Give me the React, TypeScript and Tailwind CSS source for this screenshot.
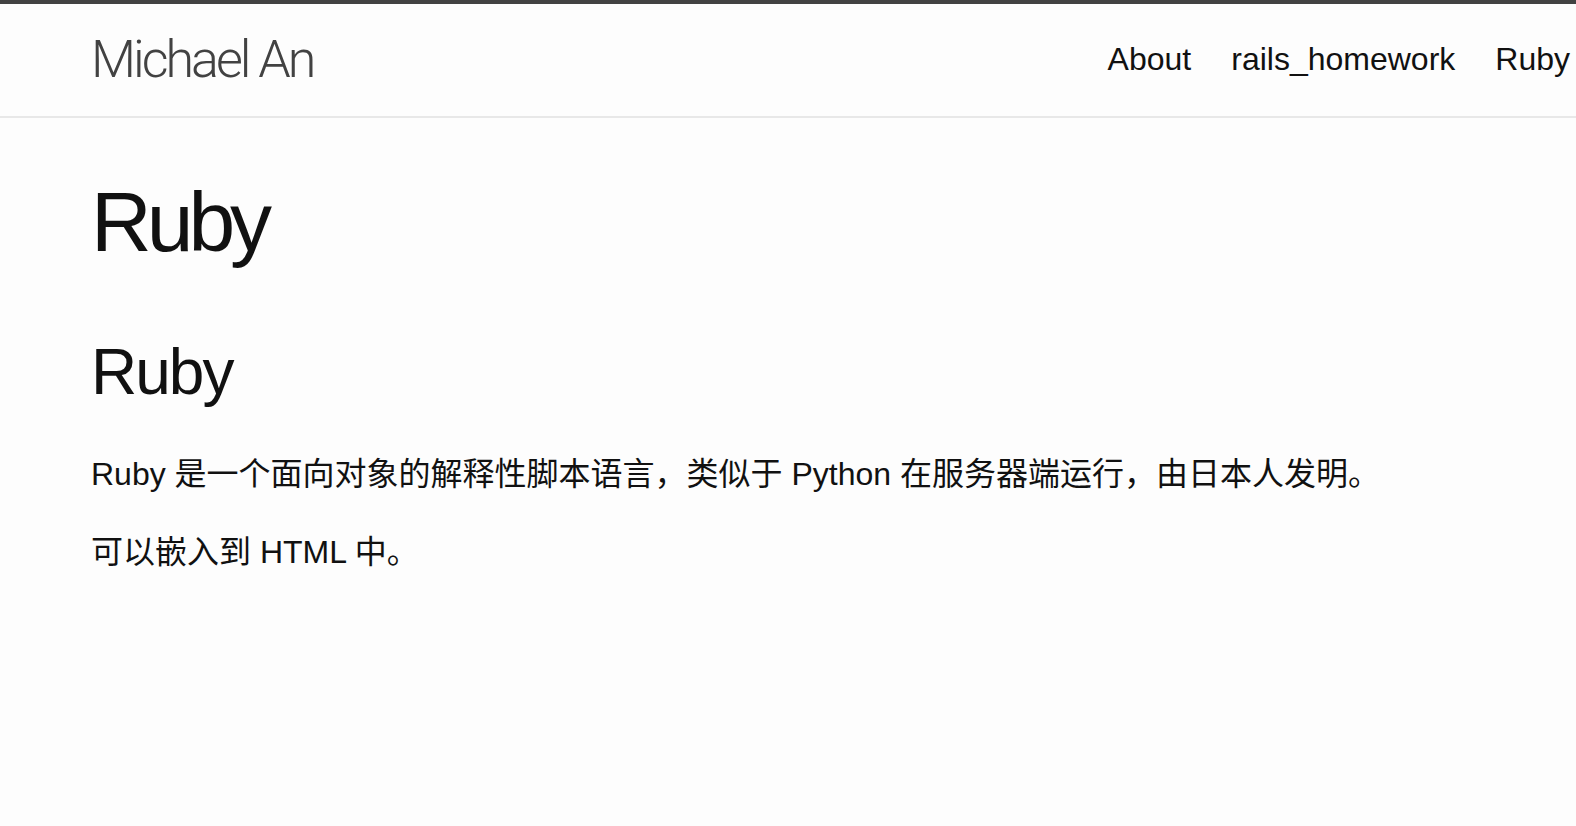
const body = '"Liberation Sans", "Noto Sans CJK SC", sans-serif';

export default function App() {
  return (
    <div className="min-h-screen bg-[#fdfdfd] text-[#111]" style={{ fontFamily: body }}>
      <header className="border-t-4 border-b-2 border-t-[#424242] border-b-[#e8e8e8]">
        <div className="flex items-start justify-between pl-[91px] pr-[6px]">
          <a
            href="#"
            className="text-[52px] leading-[112px] font-light tracking-[-3px] text-[#424242] font-['Roboto',sans-serif]"
          >
            Michael An
          </a>
          <nav className="flex gap-[40px] text-[32px] leading-[110px]">
            <a href="#">About</a>
            <a href="#">rails_homework</a>
            <a href="#">Ruby</a>
          </nav>
        </div>
      </header>

      <main className="pl-[91px] pr-[13px] pt-[62px]">
        <h1 className="text-[84px] leading-none tracking-[-5px] mb-[60px]">Ruby</h1>
        <h2 className="text-[64px] leading-[96px] tracking-[-2px] mb-[30px]">Ruby</h2>
        <p className="text-[32px] leading-[48px] mb-[30px]">
          Ruby 是一个面向对象的解释性脚本语言，类似于 Python 在服务器端运行，由日本人发明。
        </p>
        <p className="text-[32px] leading-[48px] mb-[30px]">可以嵌入到 HTML 中。</p>
      </main>
    </div>
  );
}
